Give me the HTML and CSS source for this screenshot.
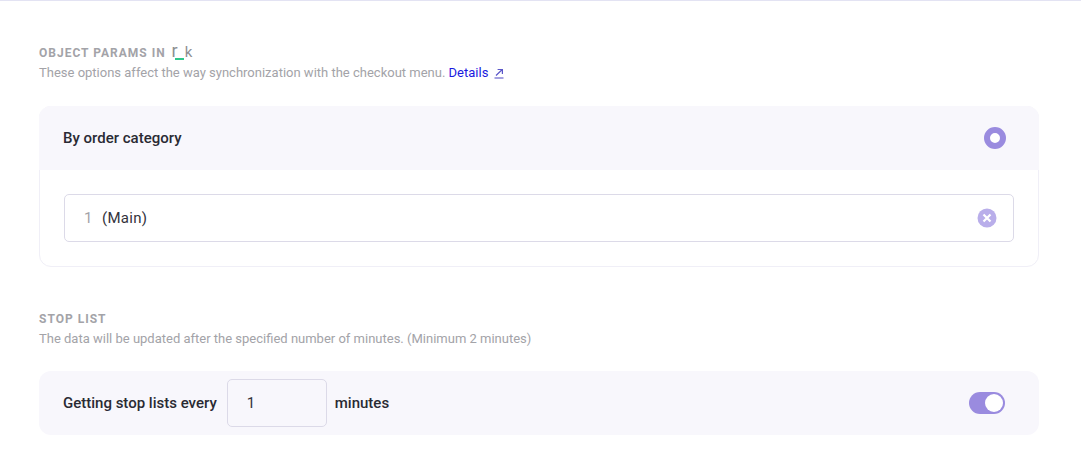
FILE: index.html
```html
<!DOCTYPE HTML>
<html>
	<head>
		<meta name="viewport" content="width=device-width, initial-scale=1">
		<link rel="stylesheet" href="styles.css">
	</head>
	<body>
		<div class="container">
			<div class="section-head">
				<h2 class="section-title">OBJECT PARAMS IN <span class="logo"><span class="logo-r">r</span><span class="logo-bar"></span><span class="logo-k">k</span></span></h2>
				<p class="section-text">These options affect the way synchronization with the checkout menu. <a class="details-link" href="#">Details</a>
					<svg class="ext-icon" width="10" height="11" viewBox="0 0 10 11"><path d="M2 7.5 L8 1.8 M3.6 1.5 H8.4 V6" fill="none" stroke="#5b57c8" stroke-width="1.2"/><path d="M0.5 10 H9.5" stroke="#5b57c8" stroke-width="1.1"/></svg>
				</p>
			</div>
			<div class="card">
				<div class="card-header">
					<span class="row-label">By order category</span>
					<span class="radio"></span>
				</div>
				<div class="card-body">
					<div class="select-box">
						<span class="select-num">1</span>
						<span class="select-name">(Main)</span>
						<svg class="clear-icon" width="20" height="20" viewBox="0 0 20 20"><circle cx="10" cy="10" r="9.5" fill="#b9aeea"/><path d="M6.5 6.5 L13.5 13.5 M13.5 6.5 L6.5 13.5" stroke="#fff" stroke-width="2.2"/></svg>
					</div>
				</div>
			</div>
			<div class="section-head stop-head">
				<h2 class="section-title">STOP LIST</h2>
				<p class="section-text">The data will be updated after the specified number of minutes. (Minimum 2 minutes)</p>
			</div>
			<div class="stop-row">
				<div class="stop-left">
					<span class="row-label">Getting stop lists every</span>
					<input class="minutes-input" value="1">
					<span class="row-label">minutes</span>
				</div>
				<span class="toggle"><span class="toggle-knob"></span></span>
			</div>
		</div>
	</body>
</html>
```

FILE: styles.css
```css
html{
	width: 100%;
	height: 100%;
	font-family: 'Roboto', sans-serif;
}
body{
	margin: 0;
	border-top: 1px solid #e3e3f3;
	background-color: white;
}
.container{
	width: 1000px;
	margin-left: 39px;
	padding-top: 44px;
}
.section-title{
	margin: 0;
	height: 16px;
	font-family: 'Roboto', sans-serif;
	font-size: 12px;
	line-height: 16px;
	font-weight: 700;
	letter-spacing: 1px;
	color: #a3a3a8;
}
.logo{
	margin-left: 2px;
	font-weight: 400;
	letter-spacing: 0;
	line-height: 0;
	color: #8d8f92;
}
.logo-r{
	font-size: 18px;
}
.logo-k{
	font-size: 15px;
}
.logo-bar{
	display: inline-block;
	width: 9px;
	height: 2px;
	margin: 0 1px 0 -3px;
	vertical-align: -3px;
	background-color: #2fc78a;
}
.section-text{
	margin: 2px 0 0;
	font-size: 13px;
	line-height: 20px;
	color: #a3a3a8;
}
.details-link{
	color: #1a1ae0;
	text-decoration: none;
}
.ext-icon{
	margin-left: 2px;
	vertical-align: -2px;
}
.card{
	margin-top: 23px;
	height: 161px;
	box-sizing: border-box;
	border: 1px solid #f0eff7;
	border-radius: 12px;
}
.card-header{
	display: flex;
	align-items: center;
	justify-content: space-between;
	height: 64px;
	margin: -1px -1px 0;
	padding: 0 33px 0 24px;
	background-color: #f8f7fc;
	border-radius: 12px 12px 0 0;
}
.row-label{
	font-size: 15px;
	font-weight: 500;
	color: #2a2a33;
}
.radio{
	width: 10px;
	height: 10px;
	border: 6px solid #9a8bdf;
	border-radius: 50%;
	background-color: white;
}
.card-body{
	padding: 24px 24px 0;
}
.select-box{
	display: flex;
	align-items: center;
	height: 48px;
	box-sizing: border-box;
	border: 1px solid #dcdae8;
	border-radius: 5px;
	padding: 0 16px 0 19px;
	font-size: 15px;
}
.select-num{
	color: #a3a3a8;
	width: 18px;
}
.select-name{
	flex: 1;
	letter-spacing: 0.3px;
	color: #33333c;
}
.stop-head{
	margin-top: 44px;
}
.stop-row{
	display: flex;
	align-items: center;
	justify-content: space-between;
	height: 64px;
	margin-top: 22px;
	padding: 0 34px 0 24px;
	background-color: #f8f7fc;
	border-radius: 12px;
}
.stop-left{
	display: flex;
	align-items: center;
}
.minutes-input{
	width: 100px;
	height: 48px;
	box-sizing: border-box;
	margin: 0 8px 0 10px;
	padding: 0 19px;
	border: 1px solid #dcdae8;
	border-radius: 5px;
	background-color: transparent;
	font-family: 'Roboto', sans-serif;
	font-size: 15px;
	color: #33333c;
}
.toggle{
	display: flex;
	align-items: center;
	justify-content: flex-end;
	width: 36px;
	height: 22px;
	border-radius: 11px;
	background-color: #9a8bdf;
}
.toggle-knob{
	width: 18px;
	height: 18px;
	margin-right: 2px;
	border-radius: 50%;
	background-color: white;
}
```
